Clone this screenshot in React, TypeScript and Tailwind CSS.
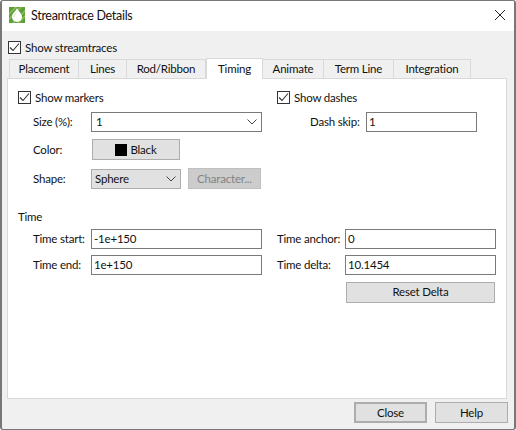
const font = "font-['Lato',sans-serif]";

function Check({ label, className = "" }: { label: string; className?: string }) {
  return (
    <label className={`flex items-center gap-[4px] h-[13px] ${className}`}>
      <span className="w-[13px] h-[13px] border border-[#333333] bg-white flex items-center justify-center">
        <svg width="11" height="11" viewBox="0 0 11 11" fill="none">
          <path d="M1 5.5L4 8.5L10 1.5" stroke="#333333" strokeWidth="1.1" />
        </svg>
      </span>
      <span>{label}</span>
    </label>
  );
}

function Chevron() {
  return (
    <svg width="10" height="6" viewBox="0 0 10 6" fill="none">
      <path d="M0.5 0.5L5 5L9.5 0.5" stroke="#444444" strokeWidth="1" />
    </svg>
  );
}

function Field({ value, className = "" }: { value: string; className?: string }) {
  return (
    <div className={`h-[20px] border border-[#7a7a7a] bg-white flex items-center pl-[2px] ${className}`}>{value}</div>
  );
}

function Button({ children, className = "" }: { children: React.ReactNode; className?: string }) {
  return (
    <button className={`border border-[#adadad] bg-[#e1e1e1] flex items-center justify-center ${className}`}>
      {children}
    </button>
  );
}

function Row({ label, labelClass, children }: { label: string; labelClass: string; children: React.ReactNode }) {
  return (
    <div className="flex items-center">
      <span className={`whitespace-nowrap shrink-0 ${labelClass}`}>{label}</span>
      {children}
    </div>
  );
}

const tabs = [
  { name: "Placement", w: "w-[70px]" },
  { name: "Lines", w: "w-[48px]" },
  { name: "Rod/Ribbon", w: "w-[79px]" },
  { name: "Timing", w: "w-[57px]", active: true },
  { name: "Animate", w: "w-[61px]" },
  { name: "Term Line", w: "w-[70px]" },
  { name: "Integration", w: "w-[77px]" },
];

export default function App() {
  return (
    <div className={`${font} w-[516px] h-[430px] flex flex-col border-t border-b border-x-2 border-[#777777] rounded-[3px] bg-[#f0f0f0] text-[11.5px] tracking-[-0.2px] leading-none text-[#111111] overflow-hidden`}>
      {/* Title bar */}
      <div className="h-[30px] shrink-0 bg-white flex items-center pl-[7px] pr-[9px]">
        <svg className="mb-[2px]" width="16" height="16" viewBox="0 0 16 16">
          <rect width="16" height="16" fill="#5f9f35" />
          <path d="M0 6L6 0H8L0 8ZM0 11L11 0H13L0 13ZM3 16L16 3V5L5 16ZM8 16L16 8V10L10 16Z" fill="#8cc063" />
          <path d="M8 1C9.5 4.5 13 6.5 13 10A5 5 0 0 1 3 10C3 6.5 6.5 4.5 8 1Z" fill="#ffffff" />
          <path d="M5 10C5 8 6.5 7 7 5.5" stroke="#c9e2b5" strokeWidth="1" fill="none" />
        </svg>
        <span className="ml-[6px] text-[12.5px] tracking-[-0.3px]">Streamtrace Details</span>
        <svg className="ml-auto mb-[2px]" width="10" height="10" viewBox="0 0 10 10" fill="none">
          <path d="M0 0L10 10M10 0L0 10" stroke="#222222" strokeWidth="1" />
        </svg>
      </div>

      <div className="flex-1 flex flex-col pl-[5px]">
        <Check label="Show streamtraces" className="mt-[10px] ml-[1px]" />

        {/* Tabs */}
        <div className="mt-[4px] h-[20px] flex items-end pl-[2px] relative z-10">
          {tabs.map((t) =>
            t.active ? (
              <div key={t.name} className={`${t.w} h-[21px] -mb-[1px] bg-white border border-b-0 border-[#d9d9d9] flex items-center justify-center`}>
                {t.name}
              </div>
            ) : (
              <div key={t.name} className={`${t.w} h-[19px] border border-l-0 first:border-l border-b-0 border-[#d9d9d9] flex items-center justify-center`}>
                {t.name}
              </div>
            ),
          )}
        </div>

        {/* Panel */}
        <div className="h-[321px] w-[500px] bg-white border border-[#d9d9d9] pl-[10px] pt-[12px]">
          <div className="flex">
            <div className="w-[244px] flex flex-col">
              <Check label="Show markers" />
              <div className="mt-[8px]">
                <Row label="Size (%):" labelClass="w-[73px] pl-[15px]">
                  <div className="w-[171px] h-[20px] border border-[#7a7a7a] bg-white flex items-center justify-between pl-[4px] pr-[4px]">
                    1
                    <Chevron />
                  </div>
                </Row>
              </div>
              <div className="mt-[7px]">
                <Row label="Color:" labelClass="w-[74px] pl-[15px]">
                  <Button className="w-[88px] h-[21px] gap-[3px]">
                    <span className="w-[12px] h-[12px] bg-black" />
                    Black
                  </Button>
                </Row>
              </div>
              <div className="mt-[8px]">
                <Row label="Shape:" labelClass="w-[73px] pl-[15px]">
                  <div className="w-[90px] h-[20px] border border-[#adadad] bg-[#e1e1e1] flex items-center justify-between pl-[3px] pr-[4px]">
                    Sphere
                    <Chevron />
                  </div>
                  <div className="ml-[7px] w-[73px] h-[21px] border border-[#bfbfbf] bg-[#cccccc] text-[#838383] flex items-center justify-center">
                    Character...
                  </div>
                </Row>
              </div>
            </div>
            <div className="ml-[15px] flex flex-col">
              <Check label="Show dashes" />
              <div className="mt-[8px]">
                <Row label="Dash skip:" labelClass="w-[89px] pl-[33px]">
                  <Field value="1" className="w-[111px]" />
                </Row>
              </div>
            </div>
          </div>

          {/* Time */}
          <div className="mt-[22px]">Time</div>
          <div className="mt-[6px] flex">
            <div className="w-[244px] flex flex-col gap-[6px]">
              <Row label="Time start:" labelClass="w-[73px] pl-[15px]">
                <Field value="-1e+150" className="w-[171px]" />
              </Row>
              <Row label="Time end:" labelClass="w-[73px] pl-[15px]">
                <Field value="1e+150" className="w-[171px]" />
              </Row>
            </div>
            <div className="ml-[15px] flex flex-col gap-[6px]">
              <Row label="Time anchor:" labelClass="w-[68px]">
                <Field value="0" className="w-[151px]" />
              </Row>
              <Row label="Time delta:" labelClass="w-[68px]">
                <Field value="10.1454" className="w-[151px]" />
              </Row>
              <Button className="ml-[69px] mt-[1px] w-[149px] h-[21px]">Reset Delta</Button>
            </div>
          </div>
        </div>

        {/* Footer */}
        <div className="mt-[3px] flex justify-end gap-[8px] pr-[6px]">
          <Button className="w-[73px] h-[21px] border-2 border-[#0078d7]">Close</Button>
          <Button className="w-[73px] h-[21px]">Help</Button>
        </div>
      </div>
    </div>
  );
}
